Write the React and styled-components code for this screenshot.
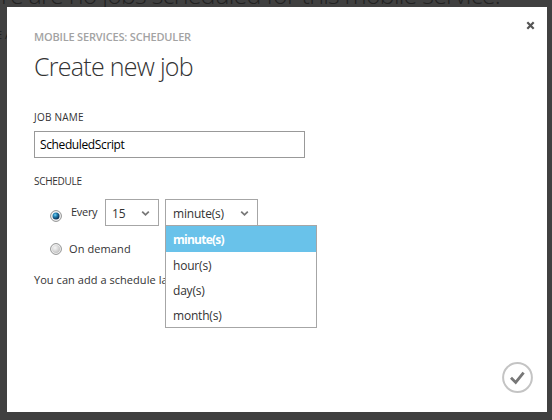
import React from "react";
import styled, { createGlobalStyle } from "styled-components";

const GlobalStyle = createGlobalStyle`
  * { box-sizing: border-box; }
  body {
    margin: 0;
    overflow: hidden;
    background: #404040;
    font-family: "Open Sans", "Noto Sans", sans-serif;
    color: #333;
  }
  h1, h2, p { margin: 0; }
`;

const Page = styled.main`
  position: relative;
  width: 552px;
  height: 420px;
  padding: 7px 5px 8px 7px;
  overflow: hidden;
`;

const BackdropText = styled.p`
  position: absolute;
  top: ${(p) => p.$top}px;
  left: ${(p) => p.$left}px;
  font-size: ${(p) => p.$size}px;
  line-height: ${(p) => p.$size}px;
  font-weight: ${(p) => p.$weight};
  letter-spacing: ${(p) => p.$spacing}px;
  color: #222;
  white-space: nowrap;
`;

const Dialog = styled.section`
  position: relative;
  display: flex;
  flex-direction: column;
  height: 405px;
  padding: 21px 27px 0;
  background: #fff;
`;

const CloseButton = styled.button`
  position: absolute;
  top: 14px;
  right: 12px;
  display: flex;
  padding: 0;
  border: 0;
  background: none;
`;

const Eyebrow = styled.p`
  height: 18px;
  font-size: 11px;
  line-height: 18px;
  font-weight: 600;
  letter-spacing: -0.18px;
  color: #a3a3a3;
`;

const Title = styled.h1`
  height: 38px;
  margin-top: 1px;
  font-size: 25px;
  line-height: 38px;
  font-weight: 300;
  letter-spacing: -0.72px;
`;

const Label = styled.h2`
  height: 16px;
  margin-top: ${(p) => p.$gap}px;
  font-size: 10px;
  line-height: 16px;
  font-weight: 400;
  letter-spacing: ${(p) => p.$spacing}px;
`;

const NameInput = styled.input`
  width: 271px;
  height: 27px;
  margin-top: 6px;
  padding: 0 5px;
  border: 1px solid #999;
  border-radius: 0;
  outline: 0;
  font: 12px "Open Sans", "Noto Sans", sans-serif;
  letter-spacing: -0.38px;
  color: #000;
`;

const Row = styled.div`
  display: flex;
  align-items: center;
  height: 27px;
  margin-top: ${(p) => p.$gap}px;
  padding-left: 16px;
`;

const Radio = styled.span`
  display: flex;
  width: 12px;
  margin-top: ${(p) => p.$drop}px;
`;

const RadioText = styled.span`
  width: ${(p) => p.$width}px;
  margin: ${(p) => p.$margin};
  font-size: ${(p) => p.$size}px;
  line-height: 18px;
  letter-spacing: ${(p) => p.$spacing}px;
  white-space: nowrap;
`;

const Select = styled.div`
  position: relative;
  display: flex;
  align-items: center;
  justify-content: space-between;
  width: ${(p) => p.$width}px;
  height: 27px;
  margin-right: 6px;
  padding: 2px 8px 0 ${(p) => p.$inset}px;
  border: 1px solid #a6a6a6;
  font-size: 12px;
  letter-spacing: ${(p) => p.$spacing || 0}px;
`;

const Menu = styled.ul`
  position: absolute;
  z-index: 1;
  top: 25px;
  left: -1px;
  width: 152px;
  height: 103px;
  margin: 0;
  padding: 0;
  border: 1px solid #a6a6a6;
  background: #fff;
  list-style: none;
`;

const Option = styled.li`
  height: ${(p) => (p.$selected ? 26 : 25)}px;
  padding-left: 7px;
  line-height: 28px;
  font-weight: ${(p) => (p.$selected ? 700 : 400)};
  letter-spacing: ${(p) => (p.$selected ? -0.75 : -0.2)}px;
  color: ${(p) => (p.$selected ? "#fff" : "#333")};
  background: ${(p) => (p.$selected ? "#69c2ea" : "transparent")};
`;

const Hint = styled.p`
  margin-top: 9px;
  font-size: 11px;
  line-height: 18px;
  letter-spacing: 0.05px;
`;

const ConfirmButton = styled.button`
  position: absolute;
  right: 14px;
  bottom: 19px;
  display: flex;
  padding: 0;
  border: 0;
  background: none;
`;

function Chevron() {
  return (
    <svg width="9" height="7" viewBox="0 0 9 7" fill="none">
      <path d="M1.2 1.7 4.5 4.8 7.8 1.7" stroke="#777" strokeWidth="1.8" />
    </svg>
  );
}

function RadioDot({ checked }) {
  const id = checked ? "radio-on" : "radio-off";
  return (
    <svg width="12" height="12" viewBox="0 0 12 12">
      <defs>
        <radialGradient id={id} cx="38%" cy="35%" r="65%">
          <stop offset="0" stopColor={checked ? "#7cd3f5" : "#f5f5f5"} />
          <stop offset="0.4" stopColor={checked ? "#2384b5" : "#e3e3e3"} />
          <stop offset="1" stopColor={checked ? "#0a2c50" : "#c3c3c3"} />
        </radialGradient>
      </defs>
      <circle cx="6" cy="6" r="5.4" fill="#f7f7f7" stroke="#8e8f8f" />
      <circle cx="6" cy="6" r={checked ? 3.5 : 4} fill={`url(#${id})`} />
    </svg>
  );
}

const units = ["minute(s)", "hour(s)", "day(s)", "month(s)"];

export default function App() {
  return (
    <>
      <GlobalStyle />
      <Page>
        <BackdropText $top={-18} $left={1} $size={25} $weight={300} $spacing={-0.78}>
          re are no jobs scheduled for this mobile service.
        </BackdropText>
        <BackdropText $top={29} $left={-4} $size={11} $weight={400} $spacing={0}>
          E A
        </BackdropText>
        <Dialog>
          <CloseButton aria-label="Close">
            <svg width="9" height="9" viewBox="0 0 9 9">
              <path d="M1.3 1.3 7.7 7.7M7.7 1.3 1.3 7.7" stroke="#555" strokeWidth="2.2" />
            </svg>
          </CloseButton>
          <Eyebrow>MOBILE SERVICES: SCHEDULER</Eyebrow>
          <Title>Create new job</Title>
          <Label $gap={24} $spacing={0.25}>JOB NAME</Label>
          <NameInput defaultValue="ScheduledScript" aria-label="Job name" />
          <Label $gap={15} $spacing={-0.3}>SCHEDULE</Label>
          <Row $gap={10}>
            <Radio $drop={7}><RadioDot checked /></Radio>
            <RadioText $width={34} $margin="0 0 1px 9px" $size={11} $spacing={-0.3}>Every</RadioText>
            <Select $width={54} $inset={6}>15<Chevron /></Select>
            <Select $width={93} $inset={7} $spacing={-0.2}>
              minute(s)<Chevron />
              <Menu>
                {units.map((unit, i) => (
                  <Option key={unit} $selected={i === 0}>{unit}</Option>
                ))}
              </Menu>
            </Select>
          </Row>
          <Row $gap={9}>
            <Radio $drop={0}><RadioDot /></Radio>
            <RadioText $width={70} $margin="1px 0 0 7px" $size={11} $spacing={0.1}>On demand</RadioText>
          </Row>
          <Hint>You can add a schedule later.</Hint>
          <ConfirmButton aria-label="Confirm">
            <svg width="31" height="31" viewBox="0 0 31 31" fill="none">
              <circle cx="15.5" cy="15.5" r="14.4" stroke="#c4c4c4" strokeWidth="2" />
              <path d="M9 15.8 13.7 20.4 21.6 10.6" stroke="#777" strokeWidth="2.8" />
            </svg>
          </ConfirmButton>
        </Dialog>
      </Page>
    </>
  );
}
